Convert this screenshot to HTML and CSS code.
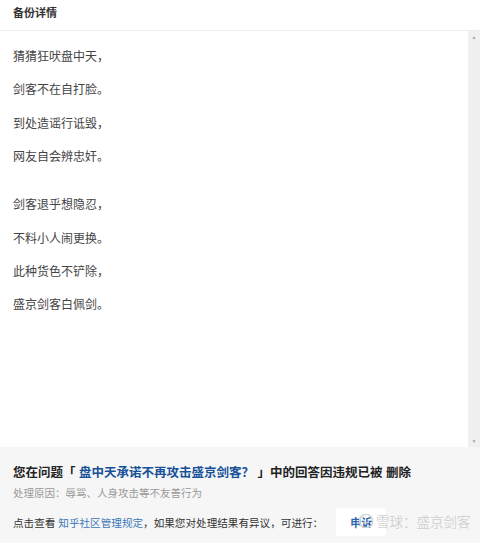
FILE: index.html
```html
<!doctype html>
<html lang="zh-CN">
<head>
    <meta charset="UTF-8">
    <meta name="viewport" content="width=device-width, initial-scale=1.0">
    <title>备份详情</title>
    <link rel="stylesheet" href="styles.css">
</head>
<body>
    <div class="page">
        <div class="header">备份详情</div>
        <div class="content-wrap">
            <div class="content">
                <div class="stanza">
                    <p>猜猜狂吠盘中天，</p>
                    <p>剑客不在自打脸。</p>
                    <p>到处造谣行诋毁，</p>
                    <p>网友自会辨忠奸。</p>
                </div>
                <div class="stanza">
                    <p>剑客退乎想隐忍，</p>
                    <p>不料小人闹更换。</p>
                    <p>此种货色不铲除，</p>
                    <p>盛京剑客白佩剑。</p>
                </div>
            </div>
            <div class="scrollbar">
                <span class="arrow">&#9650;</span>
                <span class="arrow">&#9660;</span>
            </div>
        </div>
        <div class="notice">
            <div class="notice-title">您在问题「 <a href="#">盘中天承诺不再攻击盛京剑客？</a> 」中的回答因违规已被 删除</div>
            <div class="notice-reason">处理原因：辱骂、人身攻击等不友善行为</div>
            <div class="notice-action">
                <span>点击查看 <a href="#">知乎社区管理规定</a>，如果您对处理结果有异议，可进行：</span>
                <button class="appeal">申诉</button>
            </div>
            <div class="watermark">
                <svg width="16" height="16" viewBox="0 0 18 18">
                    <circle cx="9" cy="9" r="7.5" fill="none" stroke="#d0d0d0" stroke-width="1.5"/>
                    <path d="M5 10c2 2 5 2 7-1" fill="none" stroke="#d0d0d0" stroke-width="1.5"/>
                </svg>
                <span>雪球：盛京剑客</span>
            </div>
        </div>
    </div>
</body>
</html>
```

FILE: styles.css
```css
body {
    margin: 0;
    padding: 0;
    font-family: "Liberation Sans", "Noto Sans CJK SC", sans-serif;
    background-color: #fff;
}

.page {
    width: 480px;
    height: 543px;
    display: flex;
    flex-direction: column;
    overflow: hidden;
}

.header {
    height: 30px;
    line-height: 26px;
    padding-left: 13px;
    font-size: 11px;
    font-weight: bold;
    color: #333;
    border-bottom: 1px solid #eee;
}

.content-wrap {
    display: flex;
    height: 416px;
}

.content {
    flex: 1;
    padding: 18px 13px 0;
}

.stanza {
    margin-bottom: 14.6px;
}

.stanza p {
    margin: 0;
    height: 33.4px;
    line-height: 17px;
    font-size: 12px;
    color: #444;
}

.scrollbar {
    width: 12px;
    background-color: #f0f0f0;
    display: flex;
    flex-direction: column;
    justify-content: space-between;
    align-items: center;
    padding: 3px 0;
}

.arrow {
    font-size: 5px;
    color: #a8a8a8;
}

.notice {
    flex: 1;
    background-color: #f6f6f6;
    padding: 17px 13px 0;
    position: relative;
}

.notice a {
    text-decoration: none;
}

.notice-title {
    font-size: 12.5px;
    font-weight: bold;
    color: #222;
    line-height: 18px;
}

.notice-title a {
    color: #175199;
}

.notice-reason {
    margin-top: 4px;
    font-size: 10.5px;
    color: #999;
    line-height: 14px;
}

.notice-action {
    margin-top: 8px;
    display: flex;
    align-items: center;
    font-size: 10.6px;
    color: #333;
    white-space: nowrap;
}

.notice-action a {
    color: #3b76b8;
}

.appeal {
    margin-left: 13px;
    width: 50px;
    height: 28px;
    border: none;
    border-radius: 3px;
    background-color: #fff;
    color: #2b64b0;
    font-family: inherit;
    font-size: 11px;
    font-weight: bold;
    padding: 0;
}

.watermark {
    position: absolute;
    left: 358px;
    top: 64px;
    display: flex;
    align-items: center;
    gap: 2px;
    font-size: 13.5px;
    color: #d2d2d2;
    white-space: nowrap;
    text-shadow: 0 0 1px #fff;
}
```
